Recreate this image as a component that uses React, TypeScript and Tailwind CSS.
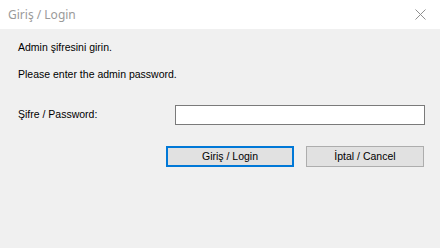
export default function App() {
  return (
    <div className="w-[440px] h-[248px] flex flex-col bg-[#f0f0f0] font-['Liberation_Sans',Arial,sans-serif] text-[10.5px] text-black">
      <div className="h-[29px] bg-white flex items-center justify-between pl-[8px] pr-[14px]">
        <span className="font-['Noto_Sans','Open_Sans',sans-serif] text-[12px] text-[#9a9a9a]">Giriş / Login</span>
        <svg width="11" height="11" viewBox="0 0 11 11" className="mb-[1px]">
          <path d="M0.5 0.5 L10.5 10.5 M10.5 0.5 L0.5 10.5" stroke="#8f8f8f" strokeWidth="1" fill="none" />
        </svg>
      </div>

      <div className="flex flex-col pl-[18px] pt-[12px]">
        <div className="h-[13px] leading-[13px]">Admin şifresini girin.</div>
        <div className="h-[13px] leading-[13px] mt-[14px]">Please enter the admin password.</div>

        <div className="flex items-center h-[20px] mt-[24px]">
          <span className="w-[157px]">Şifre / Password:</span>
          <input
            type="password"
            className="w-[250px] h-[20px] bg-white border border-[#7a7a7a] outline-none px-1"
          />
        </div>

        <div className="flex mt-[21px] pl-[148px] gap-[12px]">
          <button className="w-[128px] h-[21px] bg-[#e1e1e1] border-2 border-[#0078d7] flex items-center justify-center">
            Giriş / Login
          </button>
          <button className="w-[118px] h-[21px] bg-[#e1e1e1] border border-[#adadad] flex items-center justify-center">
            İptal / Cancel
          </button>
        </div>
      </div>
    </div>
  );
}
